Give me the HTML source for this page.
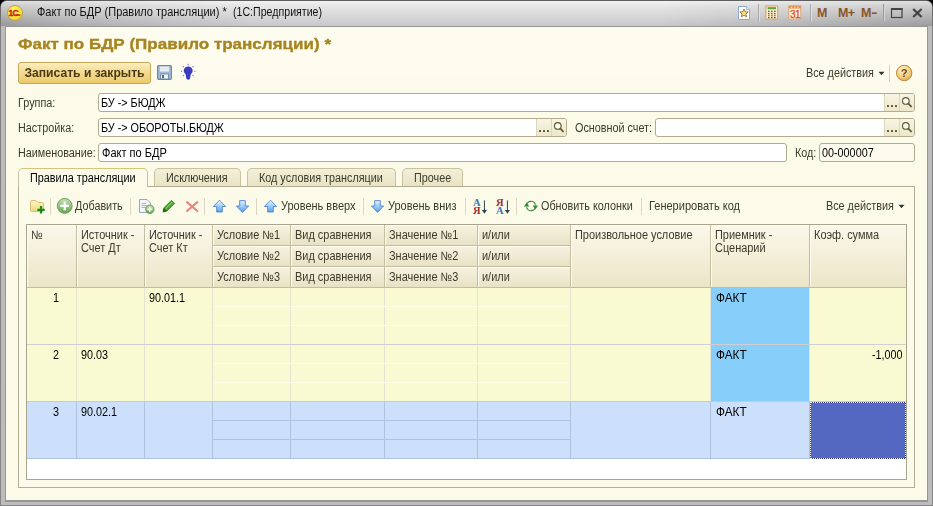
<!DOCTYPE html>
<html lang="ru"><head><meta charset="utf-8"><title>Факт по БДР</title>
<style>
html,body{margin:0;padding:0}
body{width:933px;height:506px;overflow:hidden;position:relative;background:#000;font-family:"Liberation Sans",sans-serif;font-size:12px;color:#3e3a2a;letter-spacing:0}
div,span{box-sizing:border-box}
.abs{position:absolute}
#frame{position:absolute;left:0;top:0;width:933px;height:506px;background:linear-gradient(#5e5e5e 0,#7e7e7e 30px,#848484 100%);border-radius:7px 7px 0 0}
#frame2{position:absolute;left:1px;top:1px;width:931px;height:504px;background:#bcbcbc;border-radius:6px 6px 0 0}
#frame3{position:absolute;left:5px;top:26px;width:923px;height:476px;background:#969696}
#titlebar{position:absolute;left:1px;top:1px;width:931px;height:25px;background:linear-gradient(#f2f2f2 0,#e6e6e6 20%,#d8d8d8 60%,#c8c8ca 100%);border-radius:6px 6px 0 0}
#tshade{position:absolute;left:1px;top:1px;width:931px;height:25px;border-radius:6px 6px 0 0;background:linear-gradient(to right,rgba(0,0,0,.24) 0,rgba(0,0,0,.14) 70px,rgba(0,0,0,0) 250px,rgba(0,0,0,0) 660px,rgba(0,0,0,.12) 820px,rgba(0,0,0,.22) 100%);-webkit-mask-image:linear-gradient(to bottom,rgba(0,0,0,.35),#000);mask-image:linear-gradient(to bottom,rgba(0,0,0,.35),#000)}
#content{position:absolute;left:6px;top:27px;width:921px;height:473px;background:linear-gradient(#fdfcee 0,#fdfcee 48px,#fcfae9 58px,#fcfae9 100%)}
.t{position:absolute;white-space:pre;line-height:14px;transform:scaleX(.9);transform-origin:0 0}
.s{display:inline-block;transform:scaleX(.912);transform-origin:0 0}
.inp{position:absolute;background:#fff;border:1px solid #b2ab8c;border-radius:3px;height:19px}
.tab{position:absolute;top:168px;height:18px;border:1px solid #c9c2a0;border-bottom:none;border-radius:5px 5px 0 0;background:linear-gradient(#f3efd9,#e9e3c4);text-align:center;line-height:18px}
.sep{position:absolute;width:1px;background:#dcd7c0;top:198px;height:17px}
.hc{position:absolute;border-right:1px solid #c4bea0;border-bottom:1px solid #c4bea0;box-shadow:inset 1px 1px 0 #fffdf2;background:linear-gradient(#fbf8ea,#ebe5c8);padding:4px 0 0 4px;line-height:13px;white-space:pre}
.hs{position:absolute;border-right:1px solid #c4bea0;border-bottom:1px solid #c4bea0;box-shadow:inset 1px 1px 0 #fffdf2;background:linear-gradient(#f6f2df,#e8e2c5);padding:3px 0 0 4px;line-height:14px;white-space:pre;height:21px}
.vl{position:absolute;width:1px;background:#c5cbe0}
.hl{position:absolute;height:1px;background:#c5cbe0}
</style></head><body>
<div id="frame"></div><div id="frame2"></div>
<div id="titlebar"></div><div id="tshade"></div>
<div id="frame3"></div>
<div id="content"></div>

<!-- title bar -->
<svg class="abs" style="left:6px;top:4px" width="18" height="18" viewBox="0 0 18 18"><defs><radialGradient id="lg" cx="0.45" cy="0.4" r="0.65"><stop offset="0" stop-color="#fff68c"/><stop offset="0.7" stop-color="#fbe030"/><stop offset="1" stop-color="#e2b428"/></radialGradient></defs><circle cx="9" cy="9" r="7.6" fill="url(#lg)" stroke="#b09a58" stroke-width="0.8"/><text x="2.6" y="11.8" font-family="Liberation Sans,sans-serif" font-weight="bold" font-size="8.6" fill="#d02010" stroke="#d02010" stroke-width="0.35" letter-spacing="-0.9">1С</text><path d="M9.8 11.1H14.4" stroke="#d02010" stroke-width="1.4"/></svg>
<div class="t" style="left:37px;top:5px;color:#111;transform:scaleX(.915)">Факт по БДР (Правило трансляции) *</div>
<div class="t" style="left:233px;top:5px;color:#111;transform:scaleX(.885)">(1С:Предприятие)</div>

<!-- heading -->
<div class="t" style="left:18px;top:33px;font-size:15px;font-weight:bold;color:#a6841f;line-height:22px;letter-spacing:0;transform:scaleX(1.135);transform-origin:0 0;-webkit-text-stroke:0.35px #a6841f">Факт по БДР (Правило трансляции) *</div>

<!-- button -->
<div class="abs" style="left:18px;top:62px;width:133px;height:22px;border:1px solid #c6a85a;border-radius:3px;background:linear-gradient(#fbedbf,#f3d98e 50%,#ecc96c);text-align:center;font-weight:bold;font-size:12px;line-height:20px;color:#4a3a14;letter-spacing:0"><span style="display:inline-block;transform:scaleX(1.01)">Записать и закрыть</span></div>

<div class="t" style="left:806px;top:66px">Все действия</div>


<!-- titlebar icons -->
<svg class="abs" style="left:737px;top:5px" width="15" height="16" viewBox="0 0 15 16">
<path d="M1.5 1.5H9.5L12.5 4.5V14.5H1.5Z" fill="#fdfdfe" stroke="#8eabd2" stroke-width="1"/>
<path d="M9.5 1.5V4.5H12.5" fill="#e8eef8" stroke="#8eabd2" stroke-width="0.8"/>
<path d="M7 4 L8.2 6.7 L11.1 7 L8.9 8.9 L9.6 11.8 L7 10.3 L4.4 11.8 L5.1 8.9 L2.9 7 L5.8 6.7Z" fill="#f6de86" stroke="#866624" stroke-width="0.8" stroke-linejoin="round"/></svg>
<div class="abs" style="left:758px;top:4px;width:1px;height:17px;background:#aaaaaa"></div><div class="abs" style="left:759px;top:4px;width:1px;height:17px;background:#dedede"></div>
<svg class="abs" style="left:765px;top:5px" width="14" height="15" viewBox="0 0 14 15">
<rect x="0.9" y="0.9" width="11.8" height="13.2" fill="#f9edca" stroke="#c6a66c" stroke-width="1"/>
<rect x="2.6" y="2.2" width="8.4" height="2" fill="#58a038"/>
<path d="M3 6.4H4.6M6 6.4H7.6M9 6.4H10.6M3 8.6H4.6M6 8.6H7.6M9 8.6H10.6M3 10.8H4.6M6 10.8H7.6M9 10.8H10.6M3 12.6H4.6M6 12.6H7.6M9 12.6H10.6" stroke="#7c522c" stroke-width="1.1"/></svg>
<svg class="abs" style="left:788px;top:5px" width="14" height="15" viewBox="0 0 14 15">
<rect x="0.8" y="0.9" width="12" height="13.2" fill="#fcedd2" stroke="#d6a878" stroke-width="1"/>
<rect x="0.8" y="0.9" width="12" height="2.6" fill="#e88c52"/>
<path d="M3 2.2H4.2M6.2 2.2H7.4M9.4 2.2H10.6" stroke="#fff4e0" stroke-width="1"/>
<text x="6.9" y="12.8" font-family="Liberation Sans,sans-serif" font-size="10" text-anchor="middle" fill="#dc4a28" stroke="#dc4a28" stroke-width="0.25" letter-spacing="-0.6">31</text></svg>
<div class="abs" style="left:810px;top:4px;width:1px;height:17px;background:#aaaaaa"></div><div class="abs" style="left:811px;top:4px;width:1px;height:17px;background:#dedede"></div>
<div class="t" style="left:817px;top:5px;font-size:12.5px;font-weight:bold;color:#8a562a;letter-spacing:-0.2px;line-height:16px;transform:none">M</div>
<div class="t" style="left:838px;top:5px;font-size:12.5px;font-weight:bold;color:#8a562a;letter-spacing:-0.6px;line-height:16px;transform:none">M+</div>
<div class="t" style="left:861px;top:5px;font-size:12.5px;font-weight:bold;color:#8a562a;letter-spacing:0px;line-height:16px;transform:none">M<span style="display:inline-block;transform:scaleX(1.6);transform-origin:0 50%">-</span></div>
<div class="abs" style="left:883px;top:4px;width:1px;height:17px;background:#9c9c9c"></div><div class="abs" style="left:884px;top:4px;width:1px;height:17px;background:#d4d4d4"></div>
<svg class="abs" style="left:890px;top:7px" width="14" height="12" viewBox="0 0 14 12"><rect x="1.5" y="2" width="10.5" height="8.5" fill="none" stroke="#444" stroke-width="1.2"/><path d="M1 2H12.6" stroke="#444" stroke-width="2"/></svg>
<svg class="abs" style="left:911px;top:7px" width="13" height="12" viewBox="0 0 13 12"><path d="M2.2 2 L10.6 10 M10.6 2 L2.2 10" stroke="#444" stroke-width="2.3"/></svg>

<!-- command bar icons -->
<svg class="abs" style="left:156px;top:64px" width="17" height="17" viewBox="0 0 17 17">
<rect x="1.6" y="1.6" width="13.8" height="13.8" rx="1.2" fill="#a2bad2" stroke="#6c8aa6" stroke-width="1.2"/>
<rect x="4" y="2.6" width="9" height="5" fill="#f6f8fb" stroke="#c4d0de" stroke-width="0.6"/>
<path d="M5 4.3H12M5 6H12" stroke="#cdd6e2" stroke-width="0.7"/>
<rect x="4.6" y="10" width="8" height="5" fill="#eef1f5" stroke="#5f7f9e" stroke-width="0.8"/>
<rect x="6" y="11" width="2" height="3.2" fill="#50657c"/></svg>
<svg class="abs" style="left:180px;top:63px" width="17" height="18" viewBox="0 0 17 18">
<path d="M8.2 3.4 A4.3 4.3 0 0 1 10.8 11.2 L10.4 13.6 Q10.4 16.6 8.2 16.8 Q6 16.6 6 13.6 L5.6 11.2 A4.3 4.3 0 0 1 8.2 3.4Z" fill="#3c3cc0"/>
<g fill="#8a94cc"><circle cx="8.2" cy="1.6" r="0.8"/><circle cx="3.4" cy="3.6" r="0.8"/><circle cx="13" cy="3.6" r="0.8"/><circle cx="1.6" cy="8.2" r="0.8"/><circle cx="14.8" cy="8.2" r="0.8"/><circle cx="3.4" cy="12.6" r="0.8"/><circle cx="13" cy="12.6" r="0.8"/></g></svg>
<svg class="abs" style="left:878px;top:71px" width="7" height="5" viewBox="0 0 7 5"><path d="M0.5 0.8H6.5L3.5 4.2Z" fill="#333"/></svg>
<div class="abs" style="left:889px;top:65px;width:1px;height:17px;background:#d5cfb4"></div>
<svg class="abs" style="left:895px;top:64px" width="19" height="19" viewBox="0 0 19 19">
<circle cx="9.2" cy="9" r="7.7" fill="url(#gHelp)" stroke="#b88a3a" stroke-width="1"/>
<text x="9.2" y="13.2" font-family="Liberation Sans,sans-serif" font-weight="bold" font-size="11" text-anchor="middle" fill="#6a4818">?</text></svg>

<!-- form rows -->
<div class="t" style="left:18px;top:96px">Группа:</div>
<div class="inp" style="left:98px;top:93px;width:817px"></div>
<div class="abs" style="left:884px;top:94px;width:30px;height:17px;background:linear-gradient(#f8f5e4,#ece6cb);border-radius:0 2px 2px 0"></div>
<div class="abs" style="left:884px;top:94px;width:1px;height:17px;background:#ddd6b8"></div><div class="abs" style="left:899px;top:94px;width:1px;height:17px;background:#ddd6b8"></div>
<div class="abs" style="left:887px;top:105px;width:2px;height:2px;border-radius:0.6px;background:#5c5630"></div><div class="abs" style="left:891px;top:105px;width:2px;height:2px;border-radius:0.6px;background:#5c5630"></div><div class="abs" style="left:895px;top:105px;width:2px;height:2px;border-radius:0.6px;background:#5c5630"></div>
<svg class="abs" style="left:900px;top:95px" width="14" height="15" viewBox="0 0 14 15"><circle cx="5.8" cy="5.9" r="3.3" fill="#fdfdf6" stroke="#5e5830" stroke-width="1.15"/><path d="M8.2 8.4 L11.6 12" stroke="#5e5830" stroke-width="1.8"/></svg>
<div class="t" style="left:101px;top:96px;color:#000">БУ -&gt; БЮДЖ</div>
<div class="t" style="left:18px;top:121px">Настройка:</div>
<div class="inp" style="left:98px;top:118px;width:469px"></div>
<div class="abs" style="left:536px;top:119px;width:30px;height:17px;background:linear-gradient(#f8f5e4,#ece6cb);border-radius:0 2px 2px 0"></div>
<div class="abs" style="left:536px;top:119px;width:1px;height:17px;background:#ddd6b8"></div><div class="abs" style="left:551px;top:119px;width:1px;height:17px;background:#ddd6b8"></div>
<div class="abs" style="left:539px;top:130px;width:2px;height:2px;border-radius:0.6px;background:#5c5630"></div><div class="abs" style="left:543px;top:130px;width:2px;height:2px;border-radius:0.6px;background:#5c5630"></div><div class="abs" style="left:547px;top:130px;width:2px;height:2px;border-radius:0.6px;background:#5c5630"></div>
<svg class="abs" style="left:552px;top:120px" width="14" height="15" viewBox="0 0 14 15"><circle cx="5.8" cy="5.9" r="3.3" fill="#fdfdf6" stroke="#5e5830" stroke-width="1.15"/><path d="M8.2 8.4 L11.6 12" stroke="#5e5830" stroke-width="1.8"/></svg>
<div class="t" style="left:101px;top:121px;color:#000">БУ -&gt; ОБОРОТЫ.БЮДЖ</div>
<div class="t" style="left:575px;top:121px">Основной счет:</div>
<div class="inp" style="left:655px;top:118px;width:260px"></div>
<div class="abs" style="left:884px;top:119px;width:30px;height:17px;background:linear-gradient(#f8f5e4,#ece6cb);border-radius:0 2px 2px 0"></div>
<div class="abs" style="left:884px;top:119px;width:1px;height:17px;background:#ddd6b8"></div><div class="abs" style="left:899px;top:119px;width:1px;height:17px;background:#ddd6b8"></div>
<div class="abs" style="left:887px;top:130px;width:2px;height:2px;border-radius:0.6px;background:#5c5630"></div><div class="abs" style="left:891px;top:130px;width:2px;height:2px;border-radius:0.6px;background:#5c5630"></div><div class="abs" style="left:895px;top:130px;width:2px;height:2px;border-radius:0.6px;background:#5c5630"></div>
<svg class="abs" style="left:900px;top:120px" width="14" height="15" viewBox="0 0 14 15"><circle cx="5.8" cy="5.9" r="3.3" fill="#fdfdf6" stroke="#5e5830" stroke-width="1.15"/><path d="M8.2 8.4 L11.6 12" stroke="#5e5830" stroke-width="1.8"/></svg>
<div class="t" style="left:18px;top:146px">Наименование:</div>
<div class="inp" style="left:98px;top:143px;width:689px"></div>
<div class="t" style="left:102px;top:146px;color:#000;transform:scaleX(.92)">Факт по БДР</div>
<div class="t" style="left:795px;top:146px">Код:</div>
<div class="inp" style="left:819px;top:143px;width:96px;background:#fcfaec"></div>
<div class="t" style="left:822px;top:146px;color:#000">00-000007</div>

<!-- tabs -->
<div class="abs" style="left:18px;top:186px;width:897px;height:302px;border:1px solid #b3ad93;background:#fcfbea"></div>
<div class="tab" style="left:154px;width:87px"></div><div class="t" style="left:166px;top:171px">Исключения</div>
<div class="tab" style="left:247px;width:149px"></div><div class="t" style="left:259px;top:171px">Код условия трансляции</div>
<div class="tab" style="left:402px;width:61px"></div><div class="t" style="left:414px;top:171px">Прочее</div>
<div class="tab" style="left:18px;width:130px;height:19px;background:#fcfbea;border-top-color:#d6c47e;color:#000"></div><div class="t" style="left:30px;top:171px;color:#000">Правила трансляции</div>

<!-- toolbar -->
<div class="sep" style="left:50px"></div>
<div class="t" style="left:75px;top:199px">Добавить</div>
<div class="sep" style="left:130px"></div>
<div class="sep" style="left:204px"></div>
<div class="sep" style="left:256px"></div>
<div class="t" style="left:280.5px;top:199px;transform:scaleX(.915)">Уровень вверх</div>
<div class="sep" style="left:363px"></div>
<div class="t" style="left:388px;top:199px;transform:scaleX(.915)">Уровень вниз</div>
<div class="sep" style="left:465px"></div>
<div class="sep" style="left:516px"></div>
<div class="t" style="left:541px;top:199px">Обновить колонки</div>
<div class="sep" style="left:641px"></div>
<div class="t" style="left:649px;top:199px;transform:scaleX(.92)">Генерировать код</div>
<div class="t" style="left:826px;top:199px">Все действия</div>


<!-- shared defs -->
<svg width="0" height="0" style="position:absolute"><defs>
<linearGradient id="gFold" x1="0" y1="0" x2="0" y2="1"><stop offset="0" stop-color="#fdf5c0"/><stop offset="1" stop-color="#f0d880"/></linearGradient>
<linearGradient id="gGreen" x1="0" y1="0" x2="0" y2="1"><stop offset="0" stop-color="#c4e2b2"/><stop offset="1" stop-color="#68a652"/></linearGradient>
<linearGradient id="gBlue" x1="0" y1="0" x2="0" y2="1"><stop offset="0" stop-color="#eef7ff"/><stop offset="1" stop-color="#58a2ee"/></linearGradient>
<linearGradient id="gBlueD" x1="0" y1="0" x2="0" y2="1"><stop offset="0" stop-color="#e6f2ff"/><stop offset="1" stop-color="#549cec"/></linearGradient>
<radialGradient id="gHelp" cx="0.4" cy="0.3" r="0.8"><stop offset="0" stop-color="#fff2cc"/><stop offset="0.6" stop-color="#f4cc78"/><stop offset="1" stop-color="#dca040"/></radialGradient>
</defs></svg>

<!-- toolbar icons -->
<svg class="abs" style="left:28px;top:198px" width="18" height="18" viewBox="0 0 18 18">
<path d="M2.5 3.5 Q2.5 2.5 3.5 2.5 H8 L10 4.5 H14.5 Q15.5 4.5 15.5 5.5 V12.5 Q15.5 13.5 14.5 13.5 H3.5 Q2.5 13.5 2.5 12.5Z" fill="url(#gFold)" stroke="#d8be78" stroke-width="1"/>
<path d="M13 8V15.5M9.3 11.8H16.7" stroke="#1a8c1a" stroke-width="2.2" fill="none"/></svg>
<svg class="abs" style="left:56px;top:197px" width="18" height="18" viewBox="0 0 18 18">
<circle cx="8.7" cy="8.9" r="7.4" fill="url(#gGreen)" stroke="#6c9c5a" stroke-width="1"/>
<path d="M8.7 4.6V13.2M4.4 8.9H13" stroke="#fff" stroke-width="2.2" fill="none"/></svg>

<svg class="abs" style="left:138px;top:198px" width="18" height="18" viewBox="0 0 18 18">
<path d="M1.5 1.5H9L12.5 5V14.5H1.5Z" fill="#f4f6fa" stroke="#9aa6bc" stroke-width="1"/>
<path d="M3.5 5.5H8M3.5 7.5H10M3.5 9.5H8" stroke="#a8b4c8" stroke-width="1"/>
<circle cx="11.8" cy="11.3" r="4.2" fill="url(#gGreen)" stroke="#5a8a48" stroke-width="0.8"/>
<path d="M11.8 8.8V13.8M9.3 11.3H14.3" stroke="#fff" stroke-width="1.6"/></svg>

<svg class="abs" style="left:161px;top:198px" width="16" height="16" viewBox="0 0 16 16">
<path d="M2 14 L2.8 10 L10.5 2.3 L13.6 5.4 L5.9 13.1Z" fill="#46a82c" stroke="#2a7a1a" stroke-width="0.8"/>
<path d="M2 14 L2.8 10 L5.9 13.1Z" fill="#2c5a18"/>
<path d="M4.6 10.8 L11.4 4" stroke="#9ee07a" stroke-width="1"/></svg>

<svg class="abs" style="left:185px;top:200px" width="14" height="14" viewBox="0 0 14 14">
<path d="M2 2.1 L12.3 11 M12.3 2.1 L2 11" stroke="#e8867a" stroke-width="2.1" stroke-linecap="round"/></svg>

<svg class="abs" style="left:212px;top:199px" width="15" height="15" viewBox="0 0 15 15">
<path d="M7.5 1.2 L13.6 7.5 H10.3 V13 H4.7 V7.5 H1.4Z" fill="url(#gBlue)" stroke="#4c86cc" stroke-width="0.9" stroke-linejoin="round"/></svg>
<svg class="abs" style="left:235px;top:199px" width="15" height="15" viewBox="0 0 15 15">
<path d="M7.5 13.4 L13.6 7 H10.3 V1.6 H4.7 V7 H1.4Z" fill="url(#gBlueD)" stroke="#4c86cc" stroke-width="0.9" stroke-linejoin="round"/></svg>
<svg class="abs" style="left:263px;top:199px" width="15" height="15" viewBox="0 0 15 15">
<path d="M7.5 1.2 L13.6 7.5 H10.3 V13 H4.7 V7.5 H1.4Z" fill="url(#gBlue)" stroke="#4c86cc" stroke-width="0.9" stroke-linejoin="round"/></svg>
<svg class="abs" style="left:370px;top:199px" width="15" height="15" viewBox="0 0 15 15">
<path d="M7.5 13.4 L13.6 7 H10.3 V1.6 H4.7 V7 H1.4Z" fill="url(#gBlueD)" stroke="#4c86cc" stroke-width="0.9" stroke-linejoin="round"/></svg>

<svg class="abs" style="left:472px;top:197px" width="17" height="19" viewBox="0 0 17 19" font-family="Liberation Serif,serif" font-weight="bold" font-size="11.3">
<text x="1" y="8.7" fill="#3a74b0" transform="scale(0.93,1)">A</text><text x="1.2" y="16.6" fill="#a03030" transform="scale(0.93,1)">Я</text>
<path d="M12.4 3.4V15" stroke="#2c4450" stroke-width="1"/><path d="M9.9 13H14.9L12.4 16.8Z" fill="#2c4450"/></svg>
<svg class="abs" style="left:495px;top:197px" width="17" height="19" viewBox="0 0 17 19" font-family="Liberation Serif,serif" font-weight="bold" font-size="11.3">
<text x="1.2" y="8.7" fill="#a03030" transform="scale(0.93,1)">Я</text><text x="1" y="16.6" fill="#3a74b0" transform="scale(0.93,1)">A</text>
<path d="M12.4 3.4V15" stroke="#2c4450" stroke-width="1"/><path d="M9.9 13H14.9L12.4 16.8Z" fill="#2c4450"/></svg>

<svg class="abs" style="left:523px;top:198px" width="17" height="16" viewBox="0 0 17 16">
<path d="M3.6 8.4 A4.5 4.5 0 0 1 12.4 6.6" fill="none" stroke="#2f8a32" stroke-width="1.25"/>
<path d="M12.4 7.6 A4.5 4.5 0 0 1 3.6 9.4" fill="none" stroke="#2f8a32" stroke-width="1.25"/>
<path d="M3.6 4.6 L6.2 8.6 H1Z" fill="#2f8a32"/>
<path d="M12.4 11.4 L9.8 7.4 H15Z" fill="#2f8a32"/></svg>

<svg class="abs" style="left:898px;top:204px" width="7" height="5" viewBox="0 0 7 5"><path d="M0.5 0.8H6.5L3.5 4.2Z" fill="#333"/></svg>

<!-- table -->
<div class="abs" style="left:26px;top:224px;width:881px;height:256px;border:1px solid #a8a48e;background:#fff"></div>
<div class="hc" style="left:27px;top:225px;width:50px;height:63px"><span class="s">№</span></div>
<div class="hc" style="left:77px;top:225px;width:68px;height:63px"><span class="s">Источник -
Счет Дт</span></div>
<div class="hc" style="left:145px;top:225px;width:68px;height:63px"><span class="s">Источник -
Счет Кт</span></div>
<div class="hs" style="left:213px;top:225px;width:78px"><span class="s">Условие №1</span></div>
<div class="hs" style="left:213px;top:246px;width:78px"><span class="s">Условие №2</span></div>
<div class="hs" style="left:213px;top:267px;width:78px"><span class="s">Условие №3</span></div>
<div class="hs" style="left:291px;top:225px;width:94px"><span class="s">Вид сравнения</span></div>
<div class="hs" style="left:291px;top:246px;width:94px"><span class="s">Вид сравнения</span></div>
<div class="hs" style="left:291px;top:267px;width:94px"><span class="s">Вид сравнения</span></div>
<div class="hs" style="left:385px;top:225px;width:93px"><span class="s">Значение №1</span></div>
<div class="hs" style="left:385px;top:246px;width:93px"><span class="s">Значение №2</span></div>
<div class="hs" style="left:385px;top:267px;width:93px"><span class="s">Значение №3</span></div>
<div class="hs" style="left:478px;top:225px;width:93px"><span class="s">и/или</span></div>
<div class="hs" style="left:478px;top:246px;width:93px"><span class="s">и/или</span></div>
<div class="hs" style="left:478px;top:267px;width:93px"><span class="s">и/или</span></div>
<div class="hc" style="left:571px;top:225px;width:140px;height:63px"><span class="s">Произвольное условие</span></div>
<div class="hc" style="left:711px;top:225px;width:99px;height:63px"><span class="s">Приемник -
Сценарий</span></div>
<div class="hc" style="left:810px;top:225px;width:96px;height:63px;border-right:none"><span class="s">Коэф. сумма</span></div>

<!-- rows -->
<div class="abs" style="left:27px;top:288px;width:879px;height:114px;background:#fafad2"></div>
<div class="abs" style="left:27px;top:402px;width:879px;height:56px;background:#cce0fb"></div>
<div class="abs" style="left:711px;top:288px;width:99px;height:113px;background:#87cefa"></div>
<div class="vl" style="left:76px;top:288px;height:113px;background:#e3e3d4"></div><div class="vl" style="left:76px;top:401px;height:58px;background:#b0c2e2"></div>
<div class="vl" style="left:144px;top:288px;height:113px;background:#e3e3d4"></div><div class="vl" style="left:144px;top:401px;height:58px;background:#b0c2e2"></div>
<div class="vl" style="left:212px;top:288px;height:113px;background:#e3e3d4"></div><div class="vl" style="left:212px;top:401px;height:58px;background:#b0c2e2"></div>
<div class="vl" style="left:290px;top:288px;height:113px;background:#e3e3d4"></div><div class="vl" style="left:290px;top:401px;height:58px;background:#b0c2e2"></div>
<div class="vl" style="left:384px;top:288px;height:113px;background:#e3e3d4"></div><div class="vl" style="left:384px;top:401px;height:58px;background:#b0c2e2"></div>
<div class="vl" style="left:477px;top:288px;height:113px;background:#e3e3d4"></div><div class="vl" style="left:477px;top:401px;height:58px;background:#b0c2e2"></div>
<div class="vl" style="left:570px;top:288px;height:113px;background:#e3e3d4"></div><div class="vl" style="left:570px;top:401px;height:58px;background:#b0c2e2"></div>
<div class="vl" style="left:710px;top:288px;height:113px;background:#e3e3d4"></div><div class="vl" style="left:710px;top:401px;height:58px;background:#b0c2e2"></div>
<div class="vl" style="left:809px;top:288px;height:113px;background:#e3e3d4"></div><div class="vl" style="left:809px;top:401px;height:58px;background:#b0c2e2"></div>
<div class="hl" style="left:27px;top:344px;width:879px;background:#cfcfcf"></div>
<div class="hl" style="left:27px;top:401px;width:879px;background:#c4cbd8"></div>
<div class="hl" style="left:27px;top:458px;width:879px;background:#b0c2e2"></div>
<div class="hl" style="left:213px;top:420px;width:357px;background:#b0c2e2"></div>
<div class="hl" style="left:213px;top:439px;width:357px;background:#b0c2e2"></div>
<div class="hl" style="left:213px;top:306px;width:357px;background:#fdfce6"></div>
<div class="hl" style="left:213px;top:325px;width:357px;background:#fdfce6"></div>
<div class="hl" style="left:213px;top:363px;width:357px;background:#fdfce6"></div>
<div class="hl" style="left:213px;top:382px;width:357px;background:#fdfce6"></div>

<div class="abs" style="left:810px;top:402px;width:96px;height:57px;background:#343e8e;border:1px dotted #fff"><div style="width:94px;height:55px;background:#5468c2"></div></div>
<div class="t" style="left:53px;top:291px;color:#000">1</div>
<div class="t" style="left:53px;top:348px;color:#000">2</div>
<div class="t" style="left:53px;top:405px;color:#000">3</div>
<div class="t" style="left:149px;top:291px;color:#000">90.01.1</div>
<div class="t" style="left:81px;top:348px;color:#000">90.03</div>
<div class="t" style="left:81px;top:405px;color:#000">90.02.1</div>
<div class="t" style="left:715.5px;top:291px;color:#000;transform:scaleX(.98)">ФАКТ</div>
<div class="t" style="left:715.5px;top:348px;color:#000;transform:scaleX(.98)">ФАКТ</div>
<div class="t" style="left:715.5px;top:405px;color:#000;transform:scaleX(.98)">ФАКТ</div>
<div class="t" style="left:871.5px;top:348px;color:#000">-1,000</div>
</body></html>
